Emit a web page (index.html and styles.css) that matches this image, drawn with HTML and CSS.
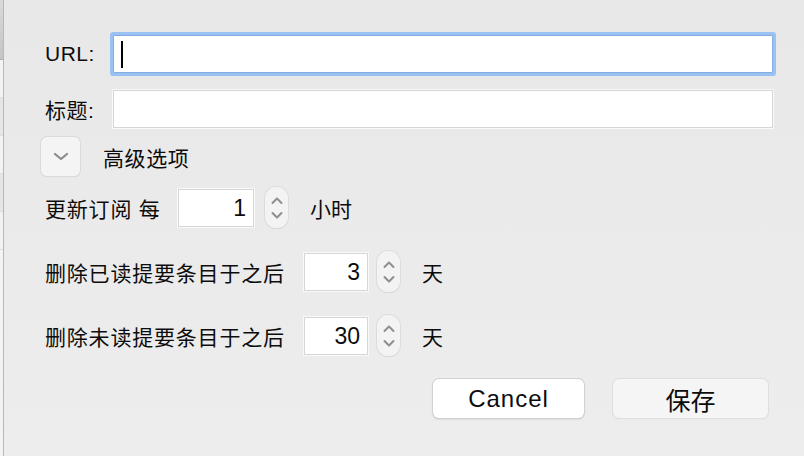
FILE: index.html
```html
<!DOCTYPE html>
<html lang="zh">
<head>
    <meta charset="UTF-8">
    <title>订阅</title>
    <link rel="stylesheet" href="styles.css">
</head>
<body>
    <div class="backdrop">
        <div class="backdrop-toolbar"></div>
        <div class="backdrop-row"></div>
        <div class="backdrop-row alt"></div>
        <div class="backdrop-row"></div>
        <div class="backdrop-row alt"></div>
        <div class="backdrop-row"></div>
    </div>

    <div class="dialog">
        <div class="field-row">
            <label>URL:</label>
            <div class="text-field focused"><span class="caret"></span></div>
        </div>

        <div class="field-row">
            <label>标题:</label>
            <div class="text-field"></div>
        </div>

        <div class="disclosure-row">
            <div class="disclosure-btn">
                <svg width="16" height="9" viewBox="0 0 16 9"><path d="M2 2 L8 7 L14 2" fill="none" stroke="#8b8b8b" stroke-width="2.2" stroke-linecap="round" stroke-linejoin="round"/></svg>
            </div>
            <span class="disclosure-title">高级选项</span>
        </div>

        <div class="option-row first">
            <span class="option-label wide-a">更新订阅 每</span>
            <div class="number-field w76">1</div>
            <div class="stepper gap-11">
                <svg width="14" height="32" viewBox="0 0 14 32"><path d="M2.5 11 L7 6.5 L11.5 11" fill="none" stroke="#8e8e8e" stroke-width="2" stroke-linecap="round" stroke-linejoin="round"/><path d="M2.5 21 L7 25.5 L11.5 21" fill="none" stroke="#8e8e8e" stroke-width="2" stroke-linecap="round" stroke-linejoin="round"/></svg>
            </div>
            <span class="unit">小时</span>
        </div>

        <div class="option-row">
            <span class="option-label wide-b">删除已读提要条目于之后</span>
            <div class="number-field w64">3</div>
            <div class="stepper gap-9">
                <svg width="14" height="32" viewBox="0 0 14 32"><path d="M2.5 11 L7 6.5 L11.5 11" fill="none" stroke="#8e8e8e" stroke-width="2" stroke-linecap="round" stroke-linejoin="round"/><path d="M2.5 21 L7 25.5 L11.5 21" fill="none" stroke="#8e8e8e" stroke-width="2" stroke-linecap="round" stroke-linejoin="round"/></svg>
            </div>
            <span class="unit">天</span>
        </div>

        <div class="option-row">
            <span class="option-label wide-b">删除未读提要条目于之后</span>
            <div class="number-field w64">30</div>
            <div class="stepper gap-9">
                <svg width="14" height="32" viewBox="0 0 14 32"><path d="M2.5 11 L7 6.5 L11.5 11" fill="none" stroke="#8e8e8e" stroke-width="2" stroke-linecap="round" stroke-linejoin="round"/><path d="M2.5 21 L7 25.5 L11.5 21" fill="none" stroke="#8e8e8e" stroke-width="2" stroke-linecap="round" stroke-linejoin="round"/></svg>
            </div>
            <span class="unit">天</span>
        </div>

        <div class="button-row">
            <button class="btn cancel">Cancel</button>
            <button class="btn save">保存</button>
        </div>
    </div>
</body>
</html>
```

FILE: styles.css
```css
/* Reset */
* {
    margin: 0;
    padding: 0;
    box-sizing: border-box;
}

body {
    display: flex;
    height: 456px;
    overflow: hidden;
    background: linear-gradient(#e8e8e8, #ededed);
    font-family: 'Liberation Sans', 'Noto Sans CJK SC', sans-serif;
    color: #0c0c0c;
}

/* window peeking out behind the sheet */
.backdrop {
    width: 4px;
    background: #f3f3f3;
    border-right: 1px solid #b8b8b8;
}

.backdrop-toolbar {
    height: 60px;
    background: linear-gradient(#d9d9d9, #c4c4c4);
    border-bottom: 1px solid #b0b0b0;
}

.backdrop-row {
    height: 38px;
    border-bottom: 1px solid #dedede;
}

.backdrop-row.alt {
    background: #e6e6e6;
}

.dialog {
    flex: 1;
    padding: 35px 31px 0 37px;
}

/* URL / title */
.field-row {
    display: flex;
    align-items: center;
    height: 38px;
    margin-bottom: 17px;
}

.field-row label {
    width: 68px;
    margin-left: 4px;
    font-size: 21px;
    letter-spacing: 0.5px;
}

.text-field {
    flex: 1;
    height: 38px;
    background: #fff;
    border: 1px solid #d6d6d6;
    box-shadow: 0 0 0 1px #f9f9f9;
    display: flex;
    align-items: center;
}

.text-field.focused {
    border: 1px solid #86ade3;
    border-radius: 1px;
    box-shadow: 0 0 0 3px #99c2f3;
}

.caret {
    width: 2px;
    height: 27px;
    margin-left: 7px;
    background: #000;
}

/* advanced options toggle */
.disclosure-row {
    display: flex;
    align-items: center;
    margin-top: -8px;
}

.disclosure-btn {
    width: 39px;
    height: 39px;
    border-radius: 6px;
    background: #f4f4f4;
    box-shadow: 0 0 0 1px #dadada, 0 1px 1px rgba(0, 0, 0, 0.12);
    display: flex;
    align-items: center;
    justify-content: center;
}

.disclosure-title {
    margin-left: 23px;
    font-size: 21px;
    letter-spacing: 0.6px;
}

/* numeric options */
.option-row {
    display: flex;
    align-items: center;
    height: 41px;
    margin-top: 23px;
    font-size: 21px;
}

.option-row.first {
    margin-top: 11px;
}

.option-label {
    margin-left: 4px;
    letter-spacing: 0.8px;
    white-space: nowrap;
}

.wide-a {
    width: 133px;
}

.wide-b {
    width: 259px;
}

.number-field {
    height: 38px;
    background: #fff;
    border: 1px solid #d6d6d6;
    box-shadow: 0 0 0 1px #f9f9f9;
    text-align: right;
    padding-right: 7px;
    line-height: 36px;
    font-size: 23px;
}

.w76 {
    width: 76px;
}

.w64 {
    width: 64px;
}

.stepper {
    width: 23px;
    height: 41px;
    border-radius: 11px;
    background: #f3f3f3;
    box-shadow: 0 0 0 1px #dcdcdc, 0 1px 1px rgba(0, 0, 0, 0.1);
    display: flex;
    align-items: center;
    justify-content: center;
}

.gap-11 {
    margin-left: 11px;
}

.gap-9 {
    margin-left: 9px;
}

.unit {
    margin-left: 22px;
}

/* footer buttons */
.button-row {
    display: flex;
    justify-content: flex-end;
    gap: 29px;
    margin-top: 23px;
    margin-right: 5px;
}

.btn {
    height: 39px;
    border: none;
    border-radius: 6px;
    font-family: 'Liberation Sans', 'Noto Sans CJK SC', sans-serif;
    font-size: 24px;
    color: #0c0c0c;
}

.cancel {
    width: 151px;
    background: #fff;
    letter-spacing: 1px;
    box-shadow: 0 0 0 1px #d2d2d2, 0 1px 2px rgba(0, 0, 0, 0.25);
}

.save {
    width: 155px;
    background: #f5f5f5;
    font-size: 25px;
    box-shadow: 0 0 0 1px #dedede, 0 1px 1px rgba(0, 0, 0, 0.1);
}
```
